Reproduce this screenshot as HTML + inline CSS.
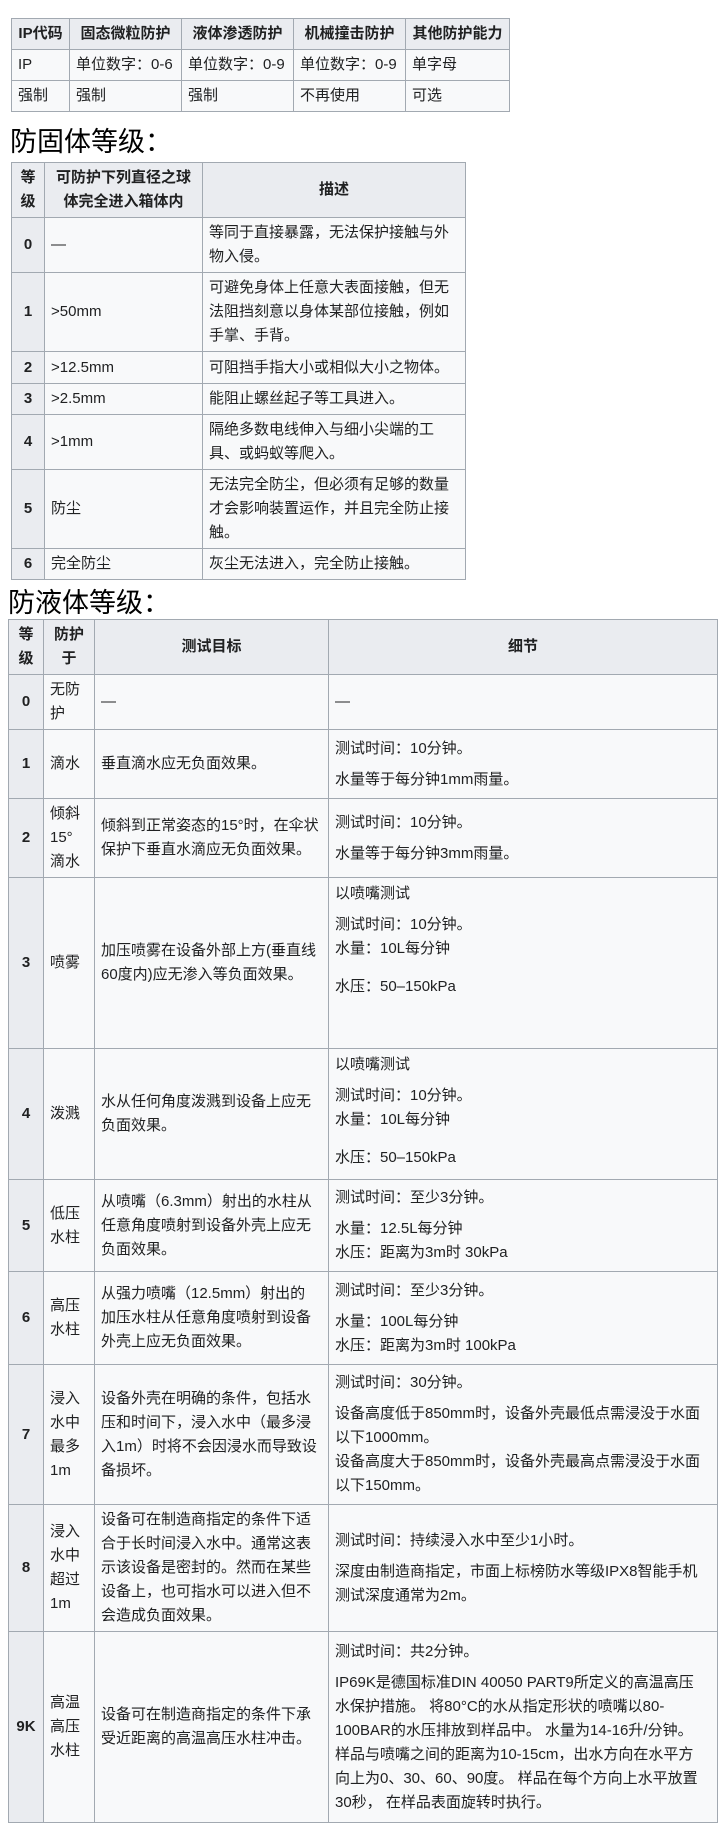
<!DOCTYPE html>
<html><head><meta charset="utf-8">
<style>
*{box-sizing:border-box;margin:0;padding:0}
body{width:724px;height:1824px;background:#fff;font-family:"Liberation Sans","Noto Sans CJK SC",sans-serif;color:#202122;font-size:15px;position:relative;overflow:hidden}
table{position:absolute;border-collapse:collapse;table-layout:fixed;background:#f8f9fa;line-height:24px}
td,th{border:1px solid #a2a9b1;padding:3px 6px;vertical-align:middle;white-space:nowrap;text-align:left;font-weight:normal}
th{background:#eaecf0;font-weight:bold;text-align:center}
td.n{background:#eaecf0;font-weight:bold;text-align:center;padding:3px 2px}
h2{position:absolute;font-weight:normal;font-size:27px;line-height:30px;color:#000;font-family:"Liberation Sans","Noto Sans CJK SC",sans-serif}
td.t{vertical-align:top;padding-top:4px}
p{margin:0}
p+p{margin-top:7px}
</style></head><body>

<table style="left:11px;top:18px;width:498px">
<col style="width:58px"><col style="width:112px"><col style="width:112px"><col style="width:112px"><col style="width:104px">
<tr style="height:31px"><th>IP代码</th><th>固态微粒防护</th><th>液体渗透防护</th><th>机械撞击防护</th><th>其他防护能力</th></tr>
<tr style="height:31px"><td>IP</td><td>单位数字：0-6</td><td>单位数字：0-9</td><td>单位数字：0-9</td><td>单字母</td></tr>
<tr style="height:30px"><td>强制</td><td>强制</td><td>强制</td><td>不再使用</td><td>可选</td></tr>
</table>

<h2 style="left:10px;top:127px">防固体等级：</h2>

<table style="left:11px;top:162px;width:454px">
<col style="width:33px"><col style="width:158px"><col style="width:263px">
<tr style="height:53px"><th>等<br>级</th><th>可防护下列直径之球<br>体完全进入箱体内</th><th>描述</th></tr>
<tr style="height:54px"><td class="n">0</td><td>—</td><td>等同于直接暴露，无法保护接触与外<br>物入侵。</td></tr>
<tr style="height:78px"><td class="n">1</td><td>&gt;50mm</td><td>可避免身体上任意大表面接触，但无<br>法阻挡刻意以身体某部位接触，例如<br>手掌、手背。</td></tr>
<tr style="height:32px"><td class="n">2</td><td>&gt;12.5mm</td><td>可阻挡手指大小或相似大小之物体。</td></tr>
<tr style="height:30px"><td class="n">3</td><td>&gt;2.5mm</td><td>能阻止螺丝起子等工具进入。</td></tr>
<tr style="height:54px"><td class="n">4</td><td>&gt;1mm</td><td>隔绝多数电线伸入与细小尖端的工<br>具、或蚂蚁等爬入。</td></tr>
<tr style="height:77px"><td class="n">5</td><td>防尘</td><td>无法完全防尘，但必须有足够的数量<br>才会影响装置运作，并且完全防止接<br>触。</td></tr>
<tr style="height:31px"><td class="n">6</td><td>完全防尘</td><td>灰尘无法进入，完全防止接触。</td></tr>
</table>

<h2 style="left:8px;top:588px">防液体等级：</h2>

<table style="left:8px;top:619px;width:709px">
<col style="width:35px"><col style="width:51px"><col style="width:234px"><col style="width:389px">
<tr style="height:54px"><th>等<br>级</th><th>防护<br>于</th><th>测试目标</th><th>细节</th></tr>
<tr style="height:54px"><td class="n">0</td><td>无防<br>护</td><td>—</td><td>—</td></tr>
<tr style="height:69px"><td class="n">1</td><td>滴水</td><td>垂直滴水应无负面效果。</td><td><p>测试时间：10分钟。</p><p>水量等于每分钟1mm雨量。</p></td></tr>
<tr style="height:78px"><td class="n">2</td><td>倾斜<br>15°<br>滴水</td><td>倾斜到正常姿态的15°时，在伞状<br>保护下垂直水滴应无负面效果。</td><td><p>测试时间：10分钟。</p><p>水量等于每分钟3mm雨量。</p></td></tr>
<tr style="height:171px"><td class="n">3</td><td>喷雾</td><td>加压喷雾在设备外部上方(垂直线<br>60度内)应无渗入等负面效果。</td><td class="t"><p>以喷嘴测试</p><p>测试时间：10分钟。<br>水量：10L每分钟</p><p style="margin-top:14px">水压：50–150kPa</p></td></tr>
<tr style="height:131px"><td class="n">4</td><td>泼溅</td><td>水从任何角度泼溅到设备上应无<br>负面效果。</td><td class="t"><p>以喷嘴测试</p><p>测试时间：10分钟。<br>水量：10L每分钟</p><p style="margin-top:14px">水压：50–150kPa</p></td></tr>
<tr style="height:92px"><td class="n">5</td><td>低压<br>水柱</td><td>从喷嘴（6.3mm）射出的水柱从<br>任意角度喷射到设备外壳上应无<br>负面效果。</td><td><p>测试时间：至少3分钟。</p><p>水量：12.5L每分钟<br>水压：距离为3m时 30kPa</p></td></tr>
<tr style="height:93px"><td class="n">6</td><td>高压<br>水柱</td><td>从强力喷嘴（12.5mm）射出的<br>加压水柱从任意角度喷射到设备<br>外壳上应无负面效果。</td><td><p>测试时间：至少3分钟。</p><p>水量：100L每分钟<br>水压：距离为3m时 100kPa</p></td></tr>
<tr style="height:140px"><td class="n">7</td><td>浸入<br>水中<br>最多<br>1m</td><td>设备外壳在明确的条件，包括水<br>压和时间下，浸入水中（最多浸<br>入1m）时将不会因浸水而导致设<br>备损坏。</td><td><p>测试时间：30分钟。</p><p>设备高度低于850mm时，设备外壳最低点需浸没于水面<br>以下1000mm。<br>设备高度大于850mm时，设备外壳最高点需浸没于水面<br>以下150mm。</p></td></tr>
<tr style="height:125px"><td class="n">8</td><td>浸入<br>水中<br>超过<br>1m</td><td>设备可在制造商指定的条件下适<br>合于长时间浸入水中。通常这表<br>示该设备是密封的。然而在某些<br>设备上，也可指水可以进入但不<br>会造成负面效果。</td><td><p>测试时间：持续浸入水中至少1小时。</p><p>深度由制造商指定，市面上标榜防水等级IPX8智能手机<br>测试深度通常为2m。</p></td></tr>
<tr style="height:191px"><td class="n">9K</td><td>高温<br>高压<br>水柱</td><td>设备可在制造商指定的条件下承<br>受近距离的高温高压水柱冲击。</td><td><p>测试时间：共2分钟。</p><p>IP69K是德国标准DIN 40050 PART9所定义的高温高压<br>水保护措施。 将80°C的水从指定形状的喷嘴以80-<br>100BAR的水压排放到样品中。 水量为14-16升/分钟。<br>样品与喷嘴之间的距离为10-15cm，出水方向在水平方<br>向上为0、30、60、90度。 样品在每个方向上水平放置<br>30秒， 在样品表面旋转时执行。</p></td></tr>
</table>
</body></html>
